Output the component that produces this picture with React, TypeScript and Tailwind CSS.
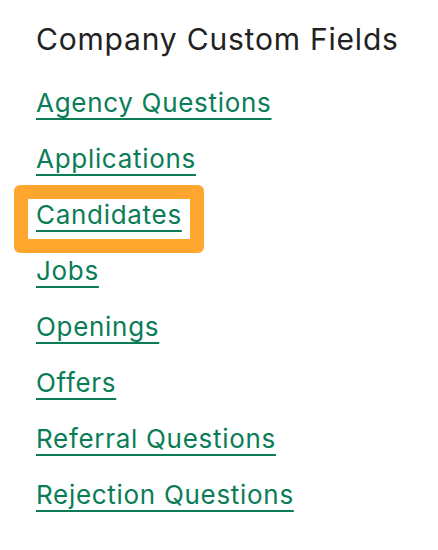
const links = [
  "Agency Questions",
  "Applications",
  "Candidates",
  "Jobs",
  "Openings",
  "Offers",
  "Referral Questions",
  "Rejection Questions",
];

export default function App() {
  return (
    <div className="min-h-[550px] w-[438px] bg-white pl-9 pt-[21px] font-['Inter',sans-serif]">
      <h2 className="text-[30px] leading-9 tracking-[0.8px] text-[#222222]">Company Custom Fields</h2>
      <ul className="mt-[18px] flex flex-col">
        {links.map((label) => (
          <li key={label} className="h-[56px]">
            <a
              href="#"
              className="relative inline-block text-[26px] leading-[56px] tracking-[0.7px] text-[#0a7d57] underline decoration-2 underline-offset-[6px]"
            >
              {label}
              {label === "Candidates" && (
                <span className="pointer-events-none absolute -bottom-[10px] -left-[22px] -right-[22px] -top-[2px] rounded-md border-[14px] border-[#ffa62e]" />
              )}
            </a>
          </li>
        ))}
      </ul>
    </div>
  );
}
